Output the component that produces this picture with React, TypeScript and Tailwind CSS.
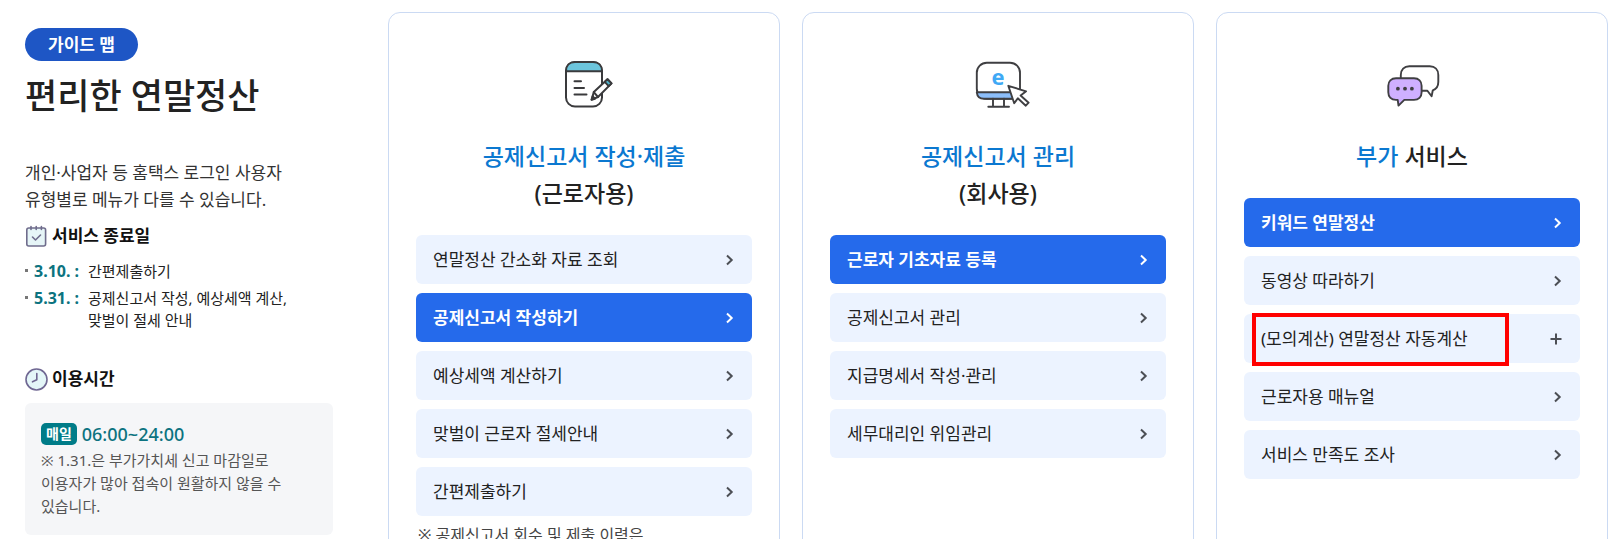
import React from 'react';
import { clsx } from 'clsx';

interface MenuItem {
  label: string;
  active?: boolean;
  expandable?: boolean;
  marked?: boolean;
}

interface MenuCardProps {
  icon: React.ReactNode;
  title: React.ReactNode;
  items: MenuItem[];
  note?: string;
}

const NoteIcon = () => (
  <svg viewBox="0 0 60 60" className="size-[60px]" fill="none" stroke="#3a3a3c" strokeWidth="2" strokeLinecap="round" strokeLinejoin="round" aria-hidden="true">
    <rect x="12" y="8" width="36" height="44.5" rx="9" fill="#fff" />
    <path d="M12 17.2C12 11.5 15.5 8 21 8h18c5.5 0 9 3.5 9 9.2z" fill="#6cc5dc" />
    <path d="M20.5 27.3h6.500M20.500 34h9.500M20.500 40.600h12" />
    <path d="M37.600 45.700l2.200-7.600L53.500 25.200l4 4.200L44 43z" fill="#fff" />
    <path d="M50.700 27.900l2.800-2.700 4 4.200-2.800 2.700z" fill="#4fb3cc" />
    <path d="M39.800 38.100L44 43M37.600 45.700l1-3.400 2.300 2.400z" fill="#3a3a3c" />
  </svg>
);

const MonitorIcon = () => (
  <svg viewBox="0 0 60 60" className="size-[60px] overflow-visible" fill="none" stroke="#3f3f42" strokeWidth="1.900" strokeLinecap="round" strokeLinejoin="round" aria-hidden="true">
    <rect x="8.800" y="8.700" width="43.200" height="36" rx="10" fill="#fff" />
    <path d="M8.800 38.300h43.200c-.5 4-3 6.400-7 6.400H16c-4 0-6.800-2.400-7.200-6.400z" fill="#8cbefa" />
    <path d="M25 44.700v8M36 44.700v8M20.300 52.700H41" />
    <text x="30" y="31" textAnchor="middle" fontSize="22" fontWeight="700" fill="#3fa9f5" stroke="none" className="font-['Open_Sans',sans-serif]">e</text>
    <path d="M40.300 31.800l17.800 5.500-5.500 4.200 8 7.200-2.800 3-8-7.400-3.600 5z" fill="#fff" />
  </svg>
);

const ChatIcon = () => (
  <svg viewBox="0 0 60 60" className="size-[60px]" fill="none" stroke="#3f3f42" strokeWidth="1.900" strokeLinecap="round" strokeLinejoin="round" aria-hidden="true">
    <path d="M18.800 26V21c0-5.200 3.300-8.700 8.500-8.700h20.500c5.200 0 8.500 3.500 8.500 8.700v7c0 4.200-2 7-5.500 8.300l-1.200 6-4.200-5.600H38" fill="#fff" />
    <path d="M14 24.300h18c4.700 0 7.600 3 7.600 7.500v6.500c0 4.700-3 7.600-7.600 7.600H22.300l-5.800 5.700-.8-5.700H14c-4.800 0-7.700-3-7.700-7.600v-6.500c0-4.500 3-7.500 7.700-7.500z" fill="#cfb0ff" />
    <g fill="#3f3f42" stroke="none">
      <circle cx="15.900" cy="34.700" r="1.900" />
      <circle cx="23" cy="34.700" r="1.900" />
      <circle cx="29.900" cy="34.700" r="1.900" />
    </g>
  </svg>
);

const CalendarIcon = () => (
  <svg viewBox="0 0 23 23" className="size-[23px]" fill="none" stroke="#6f6c8c" strokeWidth="1.600" strokeLinecap="round" strokeLinejoin="round" aria-hidden="true">
    <rect x="1.800" y="3" width="18.800" height="18" rx="2" fill="#e6f5f7" />
    <path d="M6 1.500v3M11.200 1.500v3M16.400 1.500v3" />
    <path d="M7.500 12l3 3 5-5" />
  </svg>
);

const ClockIcon = () => (
  <svg viewBox="0 0 23 23" className="size-[23px]" fill="none" stroke="#6f6792" strokeWidth="1.600" strokeLinecap="round" strokeLinejoin="round" aria-hidden="true">
    <circle cx="11.500" cy="11.500" r="10.500" fill="#e4f6f8" />
    <path d="M11.800 5.500v6.300l-4.300 2" />
  </svg>
);

const ChevronIcon = () => (
  <svg viewBox="0 0 10 12" className="h-3 w-[10px]" fill="none" stroke="currentColor" strokeWidth="2" aria-hidden="true">
    <path d="M2 1.500L6.700 6 2 10.500" />
  </svg>
);

const PlusIcon = () => (
  <svg viewBox="0 0 12 12" className="size-3" fill="none" stroke="currentColor" strokeWidth="2" aria-hidden="true">
    <path d="M6 .5v11M.5 6h11" />
  </svg>
);

const itemClass = 'relative flex h-[49px] w-full items-center justify-between rounded-md pl-[17px] text-[17px]';

const MenuRow: React.FC<{ item: MenuItem }> = ({ item }) => {
  if (item.expandable) {
    return (
      <button type="button" className={clsx(itemClass, 'bg-[#ecf3ff] pr-[18px] text-[#222]')}>
        {item.label}
        <span className="text-[#4c4f55]"><PlusIcon /></span>
        {item.marked && (
          <span className="absolute -top-px -bottom-[3px] left-2 right-[71px] border-4 border-[#ff0000]" />
        )}
      </button>
    );
  }

  return (
    <a
      href="#"
      className={clsx(
        itemClass,
        'pr-[17px]',
        item.active ? 'bg-[#256aeb] font-bold text-white' : 'bg-[#ecf3ff] text-[#222]'
      )}
    >
      {item.label}
      <span className={item.active ? 'text-white' : 'text-[#4c4f55]'}><ChevronIcon /></span>
    </a>
  );
};

const MenuCard: React.FC<MenuCardProps> = ({ icon, title, items, note }) => (
  <section className="flex flex-col rounded-xl border border-[#cbdaf3] px-[27px] pt-[41px] pb-12">
    <div className="flex justify-center">{icon}</div>
    <h2 className="mt-6 text-center text-[23px] leading-[37px] font-medium text-[#222]">{title}</h2>
    <ul className="mt-[23px] flex flex-col gap-[9px]">
      {items.map((item) => (
        <li key={item.label}><MenuRow item={item} /></li>
      ))}
    </ul>
    {note && <p className="mt-1.5 pl-0.5 text-base leading-[26px] text-[#444]">{note}</p>}
  </section>
);

const closingDates = [
  { date: '3.10. :', lines: ['간편제출하기'] },
  { date: '5.31. :', lines: ['공제신고서 작성, 예상세액 계산,', '맞벌이 절세 안내'] },
];

const reportItems: MenuItem[] = [
  { label: '연말정산 간소화 자료 조회' },
  { label: '공제신고서 작성하기', active: true },
  { label: '예상세액 계산하기' },
  { label: '맞벌이 근로자 절세안내' },
  { label: '간편제출하기' },
];

const manageItems: MenuItem[] = [
  { label: '근로자 기초자료 등록', active: true },
  { label: '공제신고서 관리' },
  { label: '지급명세서 작성·관리' },
  { label: '세무대리인 위임관리' },
];

const extraItems: MenuItem[] = [
  { label: '키워드 연말정산', active: true },
  { label: '동영상 따라하기' },
  { label: '(모의계산) 연말정산 자동계산', expandable: true, marked: true },
  { label: '근로자용 매뉴얼' },
  { label: '서비스 만족도 조사' },
];

const Sidebar = () => (
  <aside className="w-[388px] shrink-0 pt-4 pr-[55px] pl-[25px]">
    <span className="inline-flex h-[33px] items-center rounded-full bg-[#1e56c5] px-[23px] text-[17px] font-bold text-white">
      가이드 맵
    </span>
    <h1 className="mt-[10px] text-[35px] leading-[50px] font-medium text-[#222]">편리한 연말정산</h1>
    <p className="mt-[38px] text-[17px] leading-[27px] text-[#333]">
      개인·사업자 등 홈택스 로그인 사용자<br />
      유형별로 메뉴가 다를 수 있습니다.
    </p>

    <h3 className="mt-[11px] flex h-6 items-center gap-1 text-[17px] font-bold text-[#111]">
      <CalendarIcon />
      서비스 종료일
    </h3>
    <ul className="mt-3 flex flex-col gap-[5px] text-[15px] leading-[22px] text-[#222]">
      {closingDates.map(({ date, lines }) => (
        <li key={date} className="flex items-start">
          <span className="mt-[9px] mr-[6px] size-[3px] bg-[#777]" />
          <span className="w-[54px] text-base leading-[22px] font-bold text-[#0c7380]">{date}</span>
          <span>
            {lines.map((line) => (
              <span key={line} className="block">{line}</span>
            ))}
          </span>
        </li>
      ))}
    </ul>

    <h3 className="mt-9 flex h-6 items-center gap-1 text-[17px] font-bold text-[#111]">
      <ClockIcon />
      이용시간
    </h3>
    <div className="mt-3 rounded-md bg-[#f5f6f8] px-4 pt-[19px] pb-[17px]">
      <div className="flex h-6 items-center gap-[5px]">
        <span className="flex h-[22px] items-center rounded-[5px] bg-[#007c88] px-[5px] text-sm font-bold text-white">매일</span>
        <span className="text-lg leading-6 font-medium text-[#0c7380]">06:00~24:00</span>
      </div>
      <p className="mt-[3px] text-[15px] leading-[23px] text-[#555]">
        ※ 1.31.은 부가가치세 신고 마감일로<br />
        이용자가 많아 접속이 원활하지 않을 수<br />
        있습니다.
      </p>
    </div>
  </aside>
);

export default function App() {
  return (
    <div className="flex h-screen items-start overflow-hidden bg-white pt-3 pr-[11px] font-['Noto_Sans','Noto_Sans_CJK_KR',sans-serif]">
      <Sidebar />
      <main className="grid min-w-0 flex-1 grid-cols-3 gap-[22px]">
        <MenuCard
          icon={<NoteIcon />}
          title={<><span className="text-[#0b78d0]">공제신고서 작성·제출</span><br />(근로자용)</>}
          items={reportItems}
          note="※ 공제신고서 회수 및 제출 이력은"
        />
        <MenuCard
          icon={<MonitorIcon />}
          title={<><span className="text-[#0b78d0]">공제신고서 관리</span><br />(회사용)</>}
          items={manageItems}
        />
        <MenuCard
          icon={<ChatIcon />}
          title={<><span className="text-[#0b78d0]">부가</span> 서비스</>}
          items={extraItems}
        />
      </main>
    </div>
  );
}
